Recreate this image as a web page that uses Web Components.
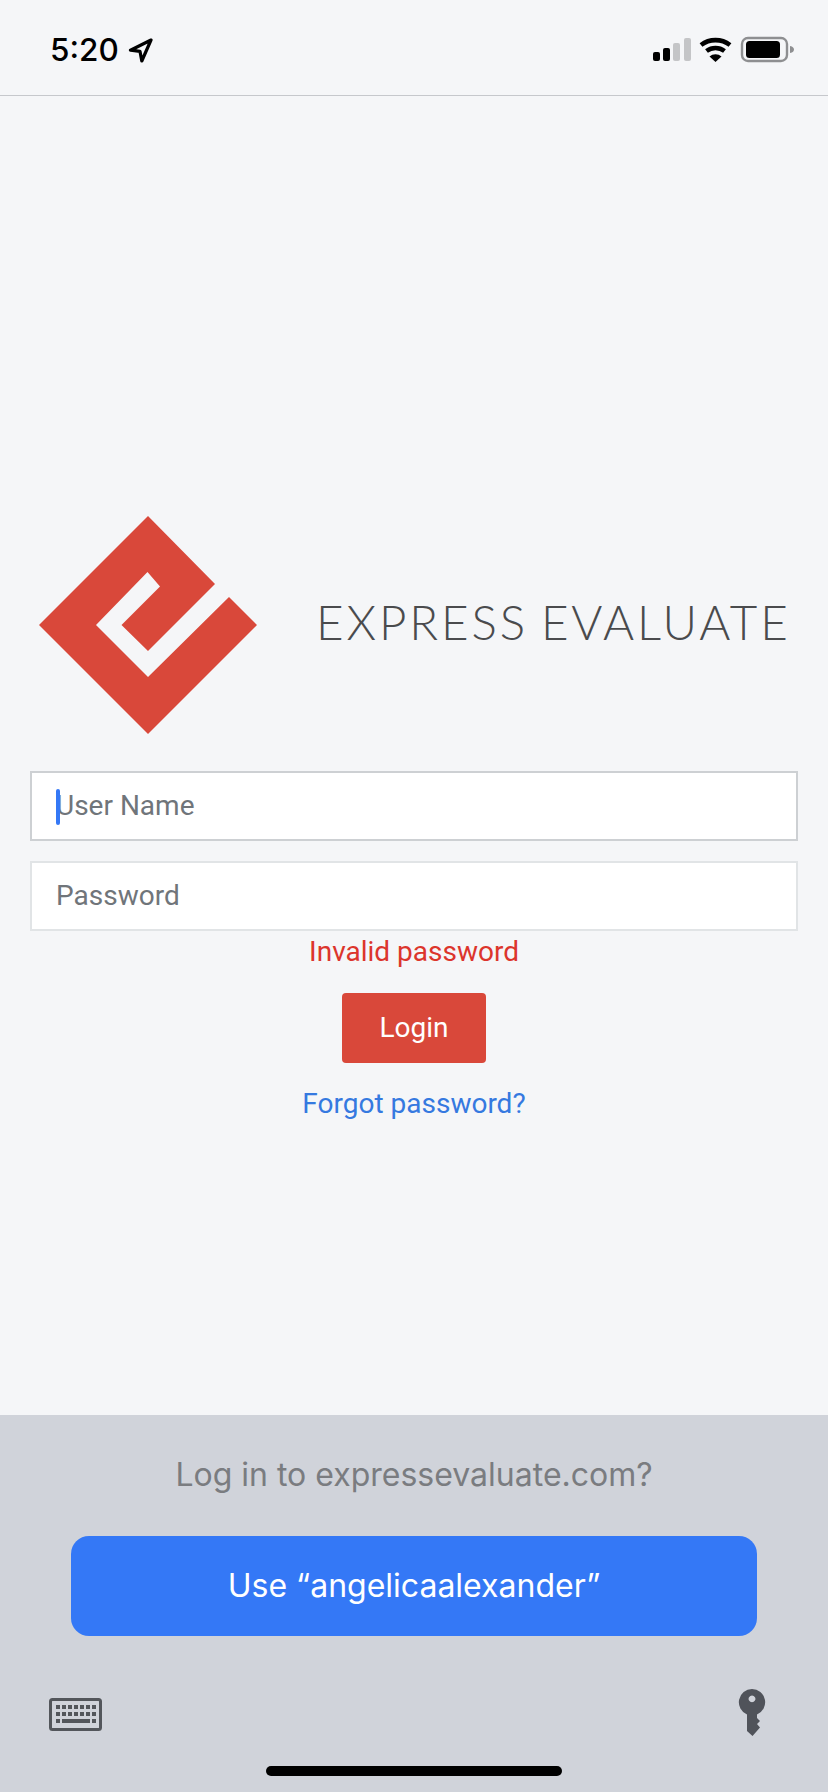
<!DOCTYPE html>
<html>
<head>
<meta charset="utf-8">
<title>Express Evaluate</title>
<style>
    html, body{
        margin: 0;
        padding: 0;
        background: #f5f6f8;
    }
    body{
        width: 828px;
        height: 1792px;
        overflow: hidden;
        display: flex;
        flex-direction: column;
    }
</style>
</head>
<body>
<status-bar time="5:20"></status-bar>

<login-page>
    <brand-logo slot="logo">EXPRESS EVALUATE</brand-logo>
    <text-field slot="fields" placeholder="User Name" focused></text-field>
    <text-field slot="fields" placeholder="Password"></text-field>
    <span slot="error">Invalid password</span>
    <span slot="action">Login</span>
    <span slot="link">Forgot password?</span>
</login-page>

<password-bar>
    <span slot="title">Log in to expressevaluate.com?</span>
    <span slot="action">Use “angelicaalexander”</span>
</password-bar>

<script>
const statusTemplate = document.createElement('template');
statusTemplate.innerHTML = `
    <style>
    :host{
        display: flex;
        flex: none;
        box-sizing: border-box;
        height: 96px;
        padding: 0 34px 0 50px;
        align-items: flex-start;
        justify-content: space-between;
        border-bottom: 1px solid #c6c8cc;
        color: #000;
    }
    .left{
        display: flex;
        align-items: center;
        gap: 9px;
        margin-top: 32px;
        height: 35px;
        font: 500 31.5px Inter, "Liberation Sans", sans-serif;
    }
    svg{
        display: block;
    }
    .right{
        margin-top: 36px;
    }
    </style>
    <div class="left">
        <span id="time"></span>
        <svg width="25" height="26" viewBox="0 0 25 26">
            <path d="M23 3 L2.5 13.2 L12 14.4 L13.8 24 Z" fill="none" stroke="#000" stroke-width="3.2" stroke-linejoin="round"/>
        </svg>
    </div>
    <svg class="right" width="142" height="27" viewBox="0 0 142 27">
        <rect x="1" y="16" width="7" height="9" rx="2" fill="#000"/>
        <rect x="11" y="12" width="7" height="13" rx="2" fill="#000"/>
        <rect x="21" y="7" width="7" height="18" rx="2" fill="#c4c5c7"/>
        <rect x="32" y="2" width="7" height="23" rx="2" fill="#c4c5c7"/>
        <path d="M49 9 A24 24 0 0 1 78 9" fill="none" stroke="#000" stroke-width="4.6"/>
        <path d="M54.5 15 A15 15 0 0 1 72.5 15" fill="none" stroke="#000" stroke-width="4.6"/>
        <path d="M57.5 20.5 L63.5 26 L69.5 20.5 A9 9 0 0 0 57.5 20.5 Z" fill="#000"/>
        <rect x="90" y="2" width="45" height="23" rx="6" fill="none" stroke="#8e8f91" stroke-width="2.4"/>
        <rect x="94" y="5" width="34" height="17" rx="3.5" fill="#000"/>
        <path d="M138 10 C141 10.5 142 12 142 13.5 C142 15 141 16.5 138 17 Z" fill="#8e8f91"/>
    </svg>
`;

class StatusBar extends HTMLElement{
    constructor(){
        super();
        this.attachShadow({mode: 'open'});
        this.shadowRoot.appendChild(statusTemplate.content.cloneNode(true));
        this.shadowRoot.getElementById('time').textContent = this.getAttribute('time');
    }
}

const logoTemplate = document.createElement('template');
logoTemplate.innerHTML = `
    <style>
    :host{
        display: flex;
        align-items: center;
        height: 220px;
        padding-left: 38px;
    }
    svg{
        display: block;
        flex: none;
    }
    .name{
        margin: 0 0 7px 58px;
        white-space: nowrap;
        font: 300 47.5px Lato, "Open Sans", sans-serif;
        letter-spacing: 2.9px;
        word-spacing: -3px;
        color: #4a4b4d;
    }
    </style>
    <svg width="220" height="220" viewBox="38 515 220 220">
        <path fill="#d9483a" d="M148 516 L215 584 L148 651 L121.5 625 L160 586.5 L147.5 572 L96 625 L148 677 L229 597 L257 625 L148 734 L39 625 Z"/>
    </svg>
    <span class="name"><slot></slot></span>
`;

class BrandLogo extends HTMLElement{
    constructor(){
        super();
        this.attachShadow({mode: 'open'});
        this.shadowRoot.appendChild(logoTemplate.content.cloneNode(true));
    }
}

const fieldTemplate = document.createElement('template');
fieldTemplate.innerHTML = `
    <style>
    :host{
        display: flex;
        align-items: center;
        box-sizing: border-box;
        height: 70px;
        padding: 0 0 2px 24px;
        background: #fff;
        border: 2px solid #e1e4e6;
        color: #70757a;
        font: 400 28px Roboto, "Liberation Sans", sans-serif;
    }
    :host([focused]){
        border-color: #cdd0d3;
    }
    .text{
        position: relative;
    }
    .caret{
        display: none;
        position: absolute;
        left: 0;
        top: 0;
        width: 4px;
        height: 36px;
        border-radius: 2px;
        background: #3478f6;
    }
    :host([focused]) .caret{
        display: block;
    }
    </style>
    <div class="text"><span class="caret"></span><span id="hint"></span></div>
`;

class TextField extends HTMLElement{
    constructor(){
        super();
        this.attachShadow({mode: 'open'});
        this.shadowRoot.appendChild(fieldTemplate.content.cloneNode(true));
        this.shadowRoot.getElementById('hint').textContent = this.getAttribute('placeholder');
    }
}

const loginTemplate = document.createElement('template');
loginTemplate.innerHTML = `
    <style>
    :host{
        display: flex;
        flex-direction: column;
        flex: 1;
        box-sizing: border-box;
        padding: 419px 30px 0;
        font: 400 28px Roboto, "Liberation Sans", sans-serif;
        text-align: center;
    }
    .logo{
        margin: 0 -30px;
    }
    .fields{
        display: flex;
        flex-direction: column;
        gap: 20px;
        margin-top: 36px;
    }
    .error{
        height: 62px;
        line-height: 41px;
        color: #dc352c;
    }
    .button{
        align-self: center;
        width: 144px;
        height: 70px;
        line-height: 70px;
        border-radius: 4px;
        background: #d9483a;
        color: #fff;
    }
    .link{
        margin-top: 20px;
        line-height: 41px;
        color: #3579e0;
    }
    </style>
    <div class="logo"><slot name="logo"></slot></div>
    <div class="fields"><slot name="fields"></slot></div>
    <div class="error"><slot name="error"></slot></div>
    <div class="button"><slot name="action"></slot></div>
    <div class="link"><slot name="link"></slot></div>
`;

class LoginPage extends HTMLElement{
    constructor(){
        super();
        this.attachShadow({mode: 'open'});
        this.shadowRoot.appendChild(loginTemplate.content.cloneNode(true));
    }
}

const barTemplate = document.createElement('template');
barTemplate.innerHTML = `
    <style>
    :host{
        display: flex;
        flex-direction: column;
        flex: none;
        box-sizing: border-box;
        height: 377px;
        padding: 0 71px;
        background: #d0d3da;
        font: 400 32px Inter, "Liberation Sans", sans-serif;
        text-align: center;
    }
    .title{
        margin-top: 38px;
        height: 83px;
        line-height: 44px;
        color: #7a7c80;
    }
    .button{
        height: 100px;
        line-height: 100px;
        border-radius: 18px;
        background: #3478f6;
        color: #fff;
    }
    .tools{
        display: flex;
        justify-content: space-between;
        align-items: flex-start;
        margin: 52px -9px 0 -22px;
    }
    svg{
        display: block;
    }
    .home{
        align-self: center;
        width: 296px;
        height: 10px;
        margin-top: 26px;
        border-radius: 5px;
        background: #000;
    }
    </style>
    <div class="title"><slot name="title"></slot></div>
    <div class="button"><slot name="action"></slot></div>
    <div class="tools">
        <svg width="54" height="42" viewBox="0 0 54 42" style="margin-top:10px">
            <rect x="1.5" y="1.5" width="50" height="30" rx="2" fill="none" stroke="#53565b" stroke-width="3"/>
            <g fill="#53565b">
                <rect x="7" y="7" width="4" height="4"/><rect x="13" y="7" width="4" height="4"/><rect x="19" y="7" width="4" height="4"/><rect x="25" y="7" width="4" height="4"/><rect x="31" y="7" width="4" height="4"/><rect x="37" y="7" width="4" height="4"/><rect x="43" y="7" width="4" height="4"/>
                <rect x="7" y="14" width="4" height="4"/><rect x="13" y="14" width="4" height="4"/><rect x="19" y="14" width="4" height="4"/><rect x="25" y="14" width="4" height="4"/><rect x="31" y="14" width="4" height="4"/><rect x="37" y="14" width="4" height="4"/><rect x="43" y="14" width="4" height="4"/>
                <rect x="7" y="21" width="4" height="4"/><rect x="13" y="21" width="28" height="4"/><rect x="43" y="21" width="4" height="4"/>
            </g>
        </svg>
        <svg width="28" height="50" viewBox="0 0 28 50">
            <path fill-rule="evenodd" fill="#50535a" d="M14 1 A13.2 13.2 0 0 1 19 26.4 L19 30 L22 33 L19 36 L22 39.5 L14.5 48 L9 43 L9 26.4 A13.2 13.2 0 0 1 14 1 Z M14 7.5 A3.4 3.4 0 1 0 14.01 7.5 Z"/>
        </svg>
    </div>
    <div class="home"></div>
`;

class PasswordBar extends HTMLElement{
    constructor(){
        super();
        this.attachShadow({mode: 'open'});
        this.shadowRoot.appendChild(barTemplate.content.cloneNode(true));
    }
}

window.customElements.define('status-bar', StatusBar);
window.customElements.define('brand-logo', BrandLogo);
window.customElements.define('text-field', TextField);
window.customElements.define('login-page', LoginPage);
window.customElements.define('password-bar', PasswordBar);
</script>
</body>
</html>
